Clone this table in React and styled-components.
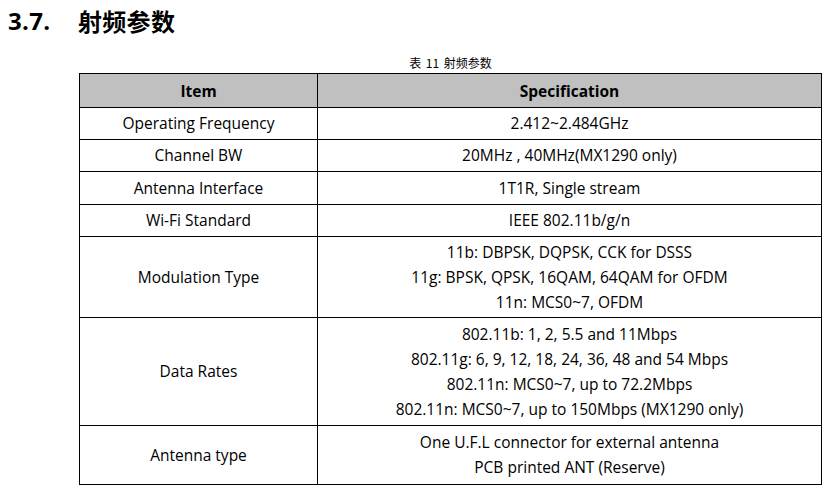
import React from "react";
import styled, { createGlobalStyle } from "styled-components";

const GlobalStyle = createGlobalStyle`
  body {
    margin: 0;
    background: #fff;
    font-family: "Open Sans", "Noto Sans CJK SC", sans-serif;
    color: #000;
  }
`;

const Page = styled.div`
  width: 829px;
  height: 493px;
  overflow: hidden;
  padding: 3px 0 0 8px;
  box-sizing: border-box;
`;

const Heading = styled.h2`
  margin: 0;
  display: flex;
  align-items: center;
  height: 34px;
  font-size: 24px;
  font-weight: 700;
  font-family: "Open Sans", "Noto Sans CJK SC", sans-serif;
  letter-spacing: 0.3px;
`;

const HeadNum = styled.span`
  width: 70px;
`;

const Caption = styled.div`
  margin: 18px 0 0 71px;
  width: 743px;
  text-align: center;
  font-size: 12px;
  word-spacing: 2px;
  line-height: 16px;
  font-family: "Noto Sans CJK SC", sans-serif;
`;

const Table = styled.table`
  margin: 2px 0 0 71px;
  width: 743px;
  border-collapse: collapse;
  table-layout: fixed;
  font-size: 15.5px;
`;

const Th = styled.th`
  background: #bfc0bf;
  border: 1.5px solid #000;
  height: 33px;
  padding: 0;
  font-weight: 700;
  text-align: center;
  vertical-align: middle;
`;

const Td = styled.td`
  border: 1.5px solid #000;
  padding: 0;
  height: ${({ $h }) => $h}px;
  text-align: center;
  vertical-align: middle;
  line-height: 25px;
`;

const rows = [
  { item: "Operating Frequency", spec: ["2.412~2.484GHz"], h: 31 },
  { item: "Channel BW", spec: ["20MHz , 40MHz(MX1290 only)"], h: 31 },
  { item: "Antenna Interface", spec: ["1T1R, Single stream"], h: 32 },
  { item: "Wi-Fi Standard", spec: ["IEEE 802.11b/g/n"], h: 31 },
  {
    item: "Modulation Type",
    spec: [
      "11b: DBPSK, DQPSK, CCK for DSSS",
      "11g: BPSK, QPSK, 16QAM, 64QAM for OFDM",
      "11n: MCS0~7, OFDM",
    ],
    h: 80,
  },
  {
    item: "Data Rates",
    spec: [
      "802.11b: 1, 2, 5.5 and 11Mbps",
      "802.11g: 6, 9, 12, 18, 24, 36, 48 and 54 Mbps",
      "802.11n: MCS0~7, up to 72.2Mbps",
      "802.11n: MCS0~7, up to 150Mbps (MX1290 only)",
    ],
    h: 107,
  },
  {
    item: "Antenna type",
    spec: [
      "One U.F.L connector for external antenna",
      "PCB printed ANT (Reserve)",
    ],
    h: 58,
  },
];

export default function App() {
  return (
    <Page>
      <GlobalStyle />
      <Heading>
        <HeadNum>3.7.</HeadNum>
        <span>射频参数</span>
      </Heading>
      <Caption>表 11 射频参数</Caption>
      <Table>
        <colgroup>
          <col style={{ width: 238 }} />
          <col />
        </colgroup>
        <thead>
          <tr>
            <Th>Item</Th>
            <Th>Specification</Th>
          </tr>
        </thead>
        <tbody>
          {rows.map((r) => (
            <tr key={r.item}>
              <Td $h={r.h}>{r.item}</Td>
              <Td $h={r.h}>
                {r.spec.map((s) => (
                  <div key={s}>{s}</div>
                ))}
              </Td>
            </tr>
          ))}
        </tbody>
      </Table>
    </Page>
  );
}
